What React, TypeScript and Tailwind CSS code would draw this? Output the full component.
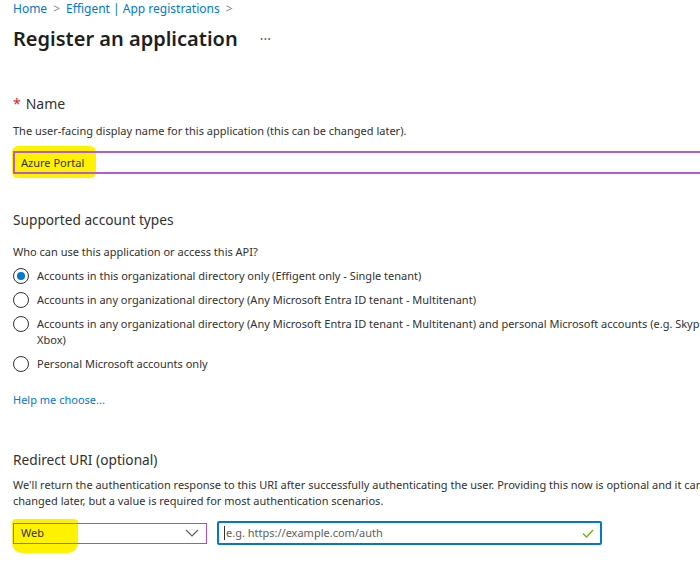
import React from "react";

const font = { fontFamily: '"Noto Sans", "Open Sans", sans-serif' };

function Radio({ checked }: { checked?: boolean }) {
  return (
    <span className="flex h-[16px] w-[16px] shrink-0 items-center justify-center rounded-full border border-[#323130] bg-white">
      {checked ? <span className="h-[8px] w-[8px] rounded-full bg-[#0078d4]" /> : null}
    </span>
  );
}

export default function App() {
  return (
    <div className="h-[569px] w-[700px] overflow-hidden bg-white text-[#323130]" style={font}>
      <div className="w-[900px] pl-[13px] pt-[1px]">
        <div className="flex items-center gap-[6px] text-[12px] leading-[16px] text-[#0078d4]">
          <span>Home</span>
          <span className="text-[#8a8886]">&gt;</span>
          <span>Effigent | App registrations</span>
          <span className="text-[#8a8886]">&gt;</span>
        </div>
        <div className="mt-[8px] flex items-center">
          <h1 className="text-[20px] font-semibold leading-[28px] text-[#201f1e]">Register an application</h1>
          <span className="ml-[22px] text-[14px] leading-[28px] text-[#605e5c]">···</span>
        </div>

        <div className="mt-[42px] flex items-center text-[14px] leading-[18px]">
          <span className="mr-[5px] text-[#e11a1a]">*</span>
          <span>Name</span>
        </div>
        <div className="mt-[10px] text-[11px] leading-[16px]">
          The user-facing display name for this application (this can be changed later).
        </div>
        <div className="relative mt-[12px] w-[760px]">
          <div className="absolute left-[-1px] top-[-5px] h-[32px] w-[84px] rounded-[6px] bg-[#fff200]" />
          <div className="relative h-[23px] w-full border-2 border-[#b45ccc] pl-[6px] text-[11px] leading-[19px]">
            Azure Portal
          </div>
        </div>

        <div className="mt-[37px] text-[13.7px] leading-[18px]">Supported account types</div>
        <div className="mt-[15px] text-[11px] leading-[16px]">Who can use this application or access this API?</div>
        <div className="mt-[8px] flex flex-col gap-[8px] text-[11px] leading-[16px]">
          <label className="flex items-start gap-[8px]">
            <Radio checked />
            <span>Accounts in this organizational directory only (Effigent only - Single tenant)</span>
          </label>
          <label className="flex items-start gap-[8px]">
            <Radio />
            <span>Accounts in any organizational directory (Any Microsoft Entra ID tenant - Multitenant)</span>
          </label>
          <label className="flex items-start gap-[8px]">
            <Radio />
            <span className="whitespace-nowrap">
              Accounts in any organizational directory (Any Microsoft Entra ID tenant - Multitenant) and personal Microsoft accounts (e.g. Skype,
              <br />
              Xbox)
            </span>
          </label>
          <label className="flex items-start gap-[8px]">
            <Radio />
            <span>Personal Microsoft accounts only</span>
          </label>
        </div>

        <div className="mt-[20px] text-[11px] leading-[16px] text-[#0078d4]">Help me choose...</div>

        <div className="mt-[43px] text-[13.7px] leading-[18px]">Redirect URI (optional)</div>
        <div className="mt-[8px] whitespace-nowrap text-[11px] leading-[16px]">
          We'll return the authentication response to this URI after successfully authenticating the user. Providing this now is optional and it can be
          <br />
          changed later, but a value is required for most authentication scenarios.
        </div>
        <div className="mt-[12px] flex items-center gap-[10px]">
          <div className="relative">
            <div className="absolute left-[-1px] top-[-4px] h-[34px] w-[66px] rounded-b-[10px] rounded-t-[4px] bg-[#fff200]" />
            <div className="relative flex h-[21px] w-[194px] items-center justify-between border-[1.5px] border-[#a94fc8] pl-[7px] pr-[7px] text-[11px]">
              <span>Web</span>
              <svg width="14" height="8" viewBox="0 0 14 8" fill="none">
                <path d="M1 1l6 6 6-6" stroke="#605e5c" strokeWidth="1.2" />
              </svg>
            </div>
          </div>
          <div className="flex h-[24px] w-[385px] items-center justify-between rounded-[2px] border-2 border-[#0078d4] bg-white pl-[5px] pr-[6px] text-[11px]">
            <span className="flex items-center text-[#605e5c]">
              <span className="mr-[1px] h-[14px] w-[1px] bg-[#323130]" />
              e.g. https://example.com/auth
            </span>
            <svg width="12" height="9" viewBox="0 0 12 9" fill="none">
              <path d="M1 4.5l3.5 3.5L11 1" stroke="#6bb700" strokeWidth="1.3" />
            </svg>
          </div>
        </div>
      </div>
    </div>
  );
}
